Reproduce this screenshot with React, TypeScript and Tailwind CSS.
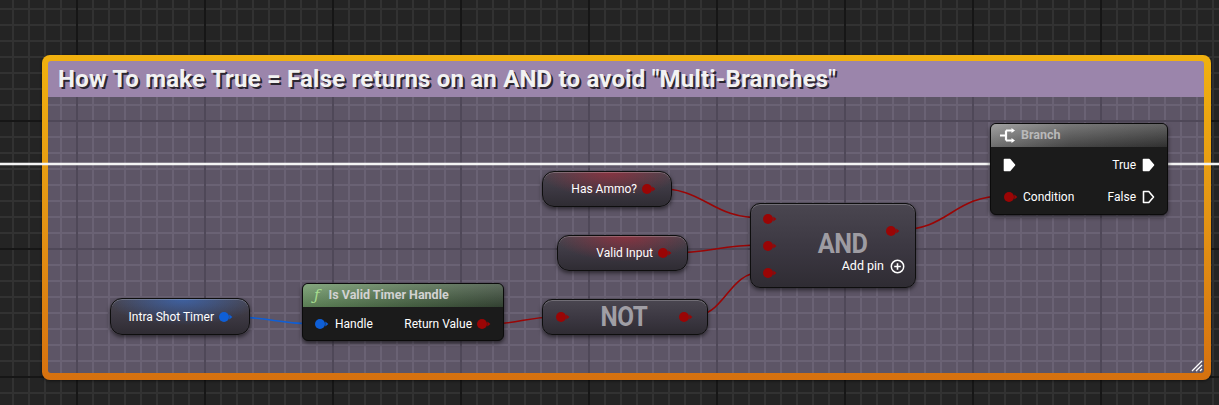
import React from "react";

const darkGrid =
  "bg-[#242424] bg-fixed bg-[linear-gradient(to_right,#161616_2px,transparent_2px),linear-gradient(to_bottom,#161616_2px,transparent_2px),linear-gradient(to_right,#323232_2px,transparent_2px),linear-gradient(to_bottom,#323232_2px,transparent_2px)] bg-[length:128px_128px,128px_128px,16px_16px,16px_16px] bg-[position:76px_120px,76px_120px,12px_8px,12px_8px]";

const commentGrid =
  "bg-[#5d5566] bg-fixed bg-[linear-gradient(to_right,#4f4858_2px,transparent_2px),linear-gradient(to_bottom,#4f4858_2px,transparent_2px),linear-gradient(to_right,#6a6274_2px,transparent_2px),linear-gradient(to_bottom,#6a6274_2px,transparent_2px)] bg-[length:128px_128px,128px_128px,16px_16px,16px_16px] bg-[position:76px_120px,76px_120px,12px_8px,12px_8px]";

const RED = "#9a0505";
const BLUE = "#0f5fd6";

function DataPin({ color }: { color: string }) {
  return (
    <svg width="14" height="10" viewBox="0 0 14 10" className="shrink-0">
      <circle cx="5" cy="5" r="5" fill={color} />
      <path d="M10.3 2.6 L13.4 5 L10.3 7.4 Z" fill={color} />
    </svg>
  );
}

function ExecPin({ filled }: { filled: boolean }) {
  return (
    <svg width="13" height="14" viewBox="0 0 13 14" className="shrink-0">
      <path
        d="M1.5 1.5 H6.8 L11.5 7 L6.8 12.5 H1.5 Z"
        fill={filled ? "#ffffff" : "none"}
        stroke="#ffffff"
        strokeWidth="1.6"
        strokeLinejoin="round"
      />
    </svg>
  );
}

// bezier between two pins, tangents horizontal like the graph editor
function wire(x1: number, y1: number, x2: number, y2: number) {
  const d = Math.max(30, Math.abs(x2 - x1) * 0.5);
  return `M${x1} ${y1} C${x1 + d} ${y1}, ${x2 - d} ${y2}, ${x2} ${y2}`;
}

const varNode =
  "absolute h-[36px] rounded-[12px] border border-[#0e0e0e] flex items-center justify-end gap-[5px] text-[12px] text-white shadow-[inset_0_1px_0_rgba(255,255,255,0.22),0_2px_4px_rgba(0,0,0,0.55)]";

const pureNode =
  "absolute rounded-[10px] border border-[#0e0e0e] bg-[linear-gradient(to_bottom,#4a4650,#3b3741_55%,#2f2c33)] shadow-[inset_0_1px_0_rgba(255,255,255,0.22),0_2px_4px_rgba(0,0,0,0.55)]";

export default function App() {
  return (
    <div
      className={`relative w-[1219px] h-[405px] overflow-hidden font-['Roboto',sans-serif] ${darkGrid}`}
    >
      {/* Comment box */}
      <div className="absolute left-[42px] top-[55px] w-[1169px] h-[325px] rounded-[8px] bg-[linear-gradient(to_bottom,#f1b10f,#e39414_50%,#d6710f)] p-[6px] pr-[7px] pb-[7px] flex flex-col shadow-[0_1px_3px_rgba(0,0,0,0.5)]">
        <div className="h-[36px] shrink-0 bg-[#9b85ab] rounded-t-[3px] flex items-center pl-[10px]">
          <span className="text-[24px] font-bold text-[#f2f2f2] [text-shadow:2px_2px_0_#2b2630] tracking-[0.2px]">
            How To make True = False returns on an AND to avoid "Multi-Branches"
          </span>
        </div>
        <div className={`relative flex-1 rounded-b-[3px] ${commentGrid}`}>
          <svg
            width="14"
            height="14"
            viewBox="0 0 14 14"
            className="absolute right-[1px] bottom-[1px]"
          >
            <path
              d="M13 3 L3 13 M13 7 L7 13 M13 11 L11 13"
              stroke="#ffffff"
              strokeWidth="1.3"
            />
          </svg>
        </div>
      </div>

      {/* Wires */}
      <svg
        width="1219"
        height="405"
        viewBox="0 0 1219 405"
        className="absolute left-0 top-0"
      >
        <path d="M0 164 H1004 M1154 164 H1219" stroke="rgba(255,255,255,0.25)" strokeWidth="4" />
        <path d="M0 164 H1004 M1154 164 H1219" stroke="#f4f4f4" strokeWidth="2" />
        <path d={wire(232, 317, 316, 324)} stroke={BLUE} strokeWidth="1.6" fill="none" />
        <path d={wire(487, 324, 557, 317)} stroke={RED} strokeWidth="1.6" fill="none" />
        <path d={wire(690, 317, 763, 272)} stroke={RED} strokeWidth="1.6" fill="none" />
        <path d={wire(653, 188, 763, 218)} stroke={RED} strokeWidth="1.6" fill="none" />
        <path d={wire(668, 253, 763, 245)} stroke={RED} strokeWidth="1.6" fill="none" />
        <path d={wire(897, 230, 1005, 196)} stroke={RED} strokeWidth="1.6" fill="none" />
      </svg>

      {/* Variable getters */}
      <div
        className={`${varNode} left-[542px] top-[171px] w-[130px] pr-[15px] bg-[radial-gradient(ellipse_55%_75%_at_52%_0%,rgba(175,40,55,0.6),transparent),linear-gradient(to_bottom,#4a4650,#3b3741_55%,#2f2c33)]`}
      >
        <span>Has Ammo?</span>
        <DataPin color={RED} />
      </div>

      <div
        className={`${varNode} left-[557px] top-[235px] w-[131px] pr-[15px] bg-[radial-gradient(ellipse_55%_75%_at_52%_0%,rgba(175,40,55,0.6),transparent),linear-gradient(to_bottom,#4a4650,#3b3741_55%,#2f2c33)]`}
      >
        <span>Valid Input</span>
        <DataPin color={RED} />
      </div>

      <div
        className={`${varNode} left-[110px] top-[298px] w-[140px] h-[37px] pr-[16px] bg-[radial-gradient(ellipse_55%_75%_at_52%_0%,rgba(55,115,215,0.6),transparent),linear-gradient(to_bottom,#4a4650,#3b3741_55%,#2f2c33)]`}
      >
        <span>Intra Shot Timer</span>
        <DataPin color={BLUE} />
      </div>

      {/* Is Valid Timer Handle */}
      <div className="absolute left-[302px] top-[283px] w-[202px] h-[58px] rounded-[6px] border border-[#0b0b0b] bg-[#1b1b1b] overflow-hidden flex flex-col shadow-[0_2px_4px_rgba(0,0,0,0.6)]">
        <div className="h-[23px] shrink-0 flex items-center gap-[9px] pl-[11px] bg-[linear-gradient(to_bottom,rgba(255,255,255,0.18),rgba(0,0,0,0.15)),linear-gradient(to_right,#6a9463,#4d6a49_55%,#3a4b39)]">
          <span className="font-['DejaVu_Serif',serif] italic text-[15px] leading-none text-[#a6dc8e]">ƒ</span>
          <span className="text-[12.5px] font-bold text-[#d2d2d2]">Is Valid Timer Handle</span>
        </div>
        <div className="flex-1 flex items-center justify-between pl-[12px] pr-[12px] text-[12px] text-white">
          <div className="flex items-center gap-[6px]">
            <DataPin color={BLUE} />
            <span>Handle</span>
          </div>
          <div className="flex items-center gap-[5px]">
            <span>Return Value</span>
            <DataPin color={RED} />
          </div>
        </div>
      </div>

      {/* NOT */}
      <div className={`${pureNode} left-[542px] top-[299px] w-[166px] h-[36px] flex items-center justify-between pl-[13px] pr-[14px]`}>
        <DataPin color={RED} />
        <span className="text-[27px] font-bold leading-none text-[#a09ea5] tracking-[-0.5px] [transform:scaleX(0.9)]">NOT</span>
        <DataPin color={RED} />
      </div>

      {/* AND */}
      <div className={`${pureNode} left-[750px] top-[203px] w-[166px] h-[85px] flex pl-[12px] pr-[15px]`}>
        <div className="flex flex-col gap-[17px] pt-[10px]">
          <DataPin color={RED} />
          <DataPin color={RED} />
          <DataPin color={RED} />
        </div>
        <div className="flex-1 flex flex-col items-end">
          <div className="pt-[22px] flex justify-end">
            <DataPin color={RED} />
          </div>
          <div className="w-full flex justify-center -mt-[6px] pl-[8px]">
            <span className="text-[28px] font-bold leading-none text-[#9e9ca2] tracking-[-0.5px] [transform:scaleX(0.9)]">AND</span>
          </div>
          <div className="flex items-center gap-[6px] -mt-[1px] -mr-[5px] text-[12.5px] text-white">
            <span>Add pin</span>
            <svg width="15" height="15" viewBox="0 0 15 15">
              <circle cx="7.5" cy="7.5" r="6.2" stroke="#ffffff" strokeWidth="1.5" fill="none" />
              <path d="M7.5 4.2 V10.8 M4.2 7.5 H10.8" stroke="#ffffff" strokeWidth="1.6" />
            </svg>
          </div>
        </div>
      </div>

      {/* Branch */}
      <div className="absolute left-[990px] top-[123px] w-[178px] h-[92px] rounded-[6px] border border-[#0b0b0b] bg-[#1b1b1b] overflow-hidden flex flex-col shadow-[0_2px_4px_rgba(0,0,0,0.6)]">
        <div className="h-[23px] shrink-0 flex items-center gap-[5px] pl-[9px] bg-[linear-gradient(to_bottom,rgba(255,255,255,0.2),rgba(0,0,0,0.2)),linear-gradient(to_right,#8a8a8a,#575757_45%,#3c3c3c)]">
          <svg width="16" height="15" viewBox="0 0 16 15">
            <path d="M0 7.5 H6 M6 2.5 V12.5 M6 2.5 H12 M6 12.5 H12" stroke="#ffffff" strokeWidth="2.2" fill="none" />
            <path d="M11.5 0 L15 2.5 L11.5 5 Z M11.5 10 L15 12.5 L11.5 15 Z" fill="#ffffff" />
          </svg>
          <span className="text-[12.5px] font-bold text-[#b9b9b9]">Branch</span>
        </div>
        <div className="flex-1 flex flex-col pt-[2px] text-[12px] text-white">
          <div className="h-[32px] flex items-center justify-between pl-[12px] pr-[12px]">
            <ExecPin filled />
            <div className="flex items-center gap-[6px]">
              <span>True</span>
              <ExecPin filled />
            </div>
          </div>
          <div className="h-[32px] flex items-center justify-between pl-[13px] pr-[12px]">
            <div className="flex items-center gap-[5px]">
              <DataPin color={RED} />
              <span>Condition</span>
            </div>
            <div className="flex items-center gap-[6px]">
              <span>False</span>
              <ExecPin filled={false} />
            </div>
          </div>
        </div>
      </div>
    </div>
  );
}
